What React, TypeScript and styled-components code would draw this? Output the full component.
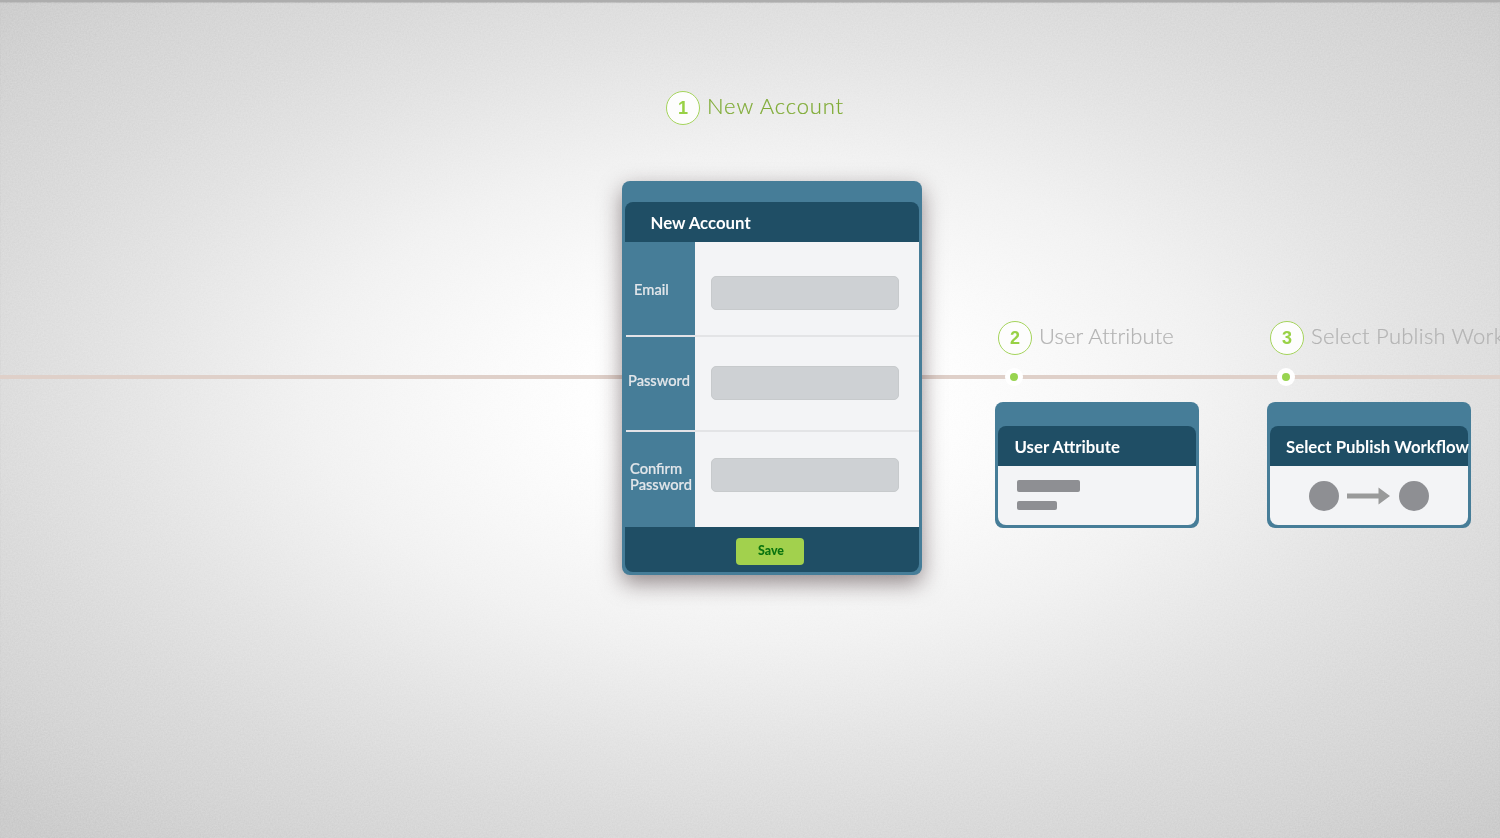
import React from "react";
import styled, { createGlobalStyle } from "styled-components";

const GlobalStyle = createGlobalStyle`
  * { box-sizing: border-box; }
  html, body { margin: 0; padding: 0; overflow: hidden; }
`;

const Page = styled.main`
  position: relative;
  width: 1500px;
  height: 838px;
  overflow: hidden;
  border-top: 2px solid #adadad;
  box-shadow: inset 0 1px 1px #bdbdbd;
  font-family: Lato, "Open Sans", sans-serif;
  background: radial-gradient(ellipse 1000px 540px at 760px 396px,
    #ffffff 0%, #fefefe 18%, #fbfbfb 26%, #f7f7f7 35%, #f2f2f2 45%, #ebebeb 55%,
    #e3e3e3 66%, #dbdbdb 79%, #d5d5d5 92%, #cccccc 108%);
`;

const Grain = styled.svg`
  position: absolute;
  inset: 0;
  width: 100%;
  height: 100%;
  opacity: 0.16;
  mix-blend-mode: overlay;
`;

const Track = styled.div`
  position: absolute;
  top: 373px;
  left: 0;
  width: 100%;
  height: 4px;
  background: #dfd0c9;
`;

const Steps = styled.div`
  position: relative;
  display: flex;
  align-items: flex-start;
  padding-left: 622px;
`;

const Step = styled.section<{ $width: number; $top: number; $gap?: number }>`
  flex: none;
  width: ${(p) => p.$width}px;
  margin-left: ${(p) => p.$gap ?? 0}px;
  padding-top: ${(p) => p.$top}px;
`;

const StepHeading = styled.header<{ $indent: number }>`
  display: flex;
  align-items: center;
  height: 34px;
  gap: 7px;
  padding-left: ${(p) => p.$indent}px;
`;

const Badge = styled.span`
  display: flex;
  flex: none;
  align-items: center;
  justify-content: center;
  width: 34px;
  height: 34px;
  border: 1px solid #a5d45c;
  border-radius: 50%;
  background: #fdfdfd;
  color: #98d145;
  font: 700 18px/34px "Liberation Sans", Arial, sans-serif;
`;

const StepTitle = styled.h2<{ $active?: boolean; $spacing: number }>`
  margin: 0;
  padding-bottom: 4px;
  font-size: 22px;
  font-weight: 300;
  line-height: 30px;
  white-space: nowrap;
  letter-spacing: ${(p) => p.$spacing}px;
  color: ${(p) => (p.$active ? "#7fab35" : "#b3b3b3")};
  -webkit-text-stroke: 0.2px currentColor;
`;

const Marker = styled.div`
  display: flex;
  align-items: center;
  justify-content: center;
  width: 18px;
  height: 18px;
  margin: 13px 0 16px 10px;
  border-radius: 50%;
  background: #fff;

  &::after {
    content: "";
    width: 8px;
    height: 8px;
    border-radius: 50%;
    background: #98d450;
  }
`;

const Card = styled.div<{ $lip: number; $raised?: boolean }>`
  padding: ${(p) => p.$lip}px 3px 3px;
  border-radius: 8px;
  background: #467d98;
  box-shadow: ${(p) => (p.$raised ? "0 8px 22px rgba(45, 25, 30, 0.5)" : "none")};
`;

const CardTitle = styled.h3<{ $indent: number }>`
  display: flex;
  align-items: center;
  height: 40px;
  margin: 0;
  padding: 2px 0 0 ${(p) => p.$indent}px;
  border-radius: 8px 8px 0 0;
  background: #1f4e65;
  color: #fff;
  font-size: 16.8px;
  font-weight: 700;
  line-height: 20px;
  white-space: nowrap;
`;

const Form = styled.form`
  margin-top: 56px;
`;

const Row = styled.div<{ $divided?: boolean }>`
  position: relative;
  display: flex;
  height: 95px;

  &::after {
    content: "";
    display: ${(p) => (p.$divided ? "block" : "none")};
    position: absolute;
    left: 1px;
    right: 0;
    bottom: 0;
    height: 2px;
    background: linear-gradient(90deg, #e3e3e7 69px, #e3e4e6 69px);
  }
`;

const Label = styled.label<{ $top: number; $indent: number }>`
  flex: none;
  width: 70px;
  padding: ${(p) => p.$top}px 0 0 ${(p) => p.$indent}px;
  color: #e2e6ea;
  font-size: 14.7px;
  font-weight: 500;
  line-height: 16px;
  white-space: pre;
  -webkit-text-stroke: 0.2px currentColor;
`;

const Field = styled.div<{ $top: number }>`
  flex: 1;
  padding: ${(p) => p.$top}px 20px 0 16px;
  background: #f3f4f6;
`;

const Input = styled.input`
  display: block;
  width: 188px;
  height: 34px;
  border: 1px solid #c7cacc;
  border-radius: 5px;
  background: #ced1d4;
`;

const Actions = styled.footer`
  display: flex;
  height: 45px;
  padding: 11px 0 0 111px;
  border-radius: 0 0 8px 8px;
  background: #1f4e65;
`;

const SaveButton = styled.button`
  width: 68px;
  height: 27px;
  padding: 0 0 1px 2px;
  border: 0;
  border-radius: 4px;
  background: #a2d14d;
  color: #0a740f;
  font: 900 12.4px/16px Lato, sans-serif;
`;

const Preview = styled.div<{ $centered?: boolean }>`
  display: flex;
  flex-direction: ${(p) => (p.$centered ? "row" : "column")};
  align-items: ${(p) => (p.$centered ? "center" : "flex-start")};
  justify-content: ${(p) => (p.$centered ? "center" : "flex-start")};
  height: 59px;
  padding: ${(p) => (p.$centered ? "0" : "14px 0 0 19px")};
  gap: ${(p) => (p.$centered ? 8 : 9)}px;
  border-radius: 0 0 8px 8px;
  background: #f3f4f6;
`;

const Bar = styled.span<{ $width: number; $height: number }>`
  width: ${(p) => p.$width}px;
  height: ${(p) => p.$height}px;
  border-radius: 2px;
  background: #8e8f93;
`;

const Dot = styled.span`
  width: 30px;
  height: 30px;
  border-radius: 50%;
  background: #8e8f93;
`;

const fields = [
  { label: "Email", top: 39, indent: 9, inputTop: 34 },
  { label: "Password", top: 35, indent: 3, inputTop: 29 },
  { label: "Confirm\nPassword", top: 28, indent: 5, inputTop: 26 },
];

export default function App() {
  return (
    <Page>
      <GlobalStyle />
      <Grain aria-hidden="true">
        <filter id="grain" colorInterpolationFilters="sRGB">
          <feTurbulence type="fractalNoise" baseFrequency="0.65" numOctaves="2" />
          <feColorMatrix values="1 0 0 0 0  1 0 0 0 0  1 0 0 0 0  0 0 0 0 1" />
        </filter>
        <rect width="100%" height="100%" filter="url(#grain)" />
      </Grain>
      <Track />
      <Steps>
        <Step $width={300} $top={89}>
          <StepHeading $indent={44}>
            <Badge>1</Badge>
            <StepTitle $active $spacing={0.85}>New Account</StepTitle>
          </StepHeading>
          <Form onSubmit={(e) => e.preventDefault()}>
            <Card $lip={21} $raised>
              <CardTitle $indent={25.5}>New Account</CardTitle>
              {fields.map((f, i) => (
                <Row key={f.label} $divided={i < 2}>
                  <Label htmlFor={`field-${i}`} $top={f.top} $indent={f.indent}>
                    {f.label}
                  </Label>
                  <Field $top={f.inputTop}>
                    <Input id={`field-${i}`} type={i ? "password" : "email"} />
                  </Field>
                </Row>
              ))}
              <Actions>
                <SaveButton>Save</SaveButton>
              </Actions>
            </Card>
          </Form>
        </Step>

        <Step $width={204} $top={319} $gap={73}>
          <StepHeading $indent={3}>
            <Badge>2</Badge>
            <StepTitle $spacing={0.1}>User Attribute</StepTitle>
          </StepHeading>
          <Marker />
          <Card $lip={24}>
            <CardTitle $indent={16.5}>User Attribute</CardTitle>
            <Preview>
              <Bar $width={63} $height={12} />
              <Bar $width={40} $height={9} />
            </Preview>
          </Card>
        </Step>

        <Step $width={204} $top={319} $gap={68}>
          <StepHeading $indent={3}>
            <Badge>3</Badge>
            <StepTitle $spacing={0.25}>Select Publish Workflow</StepTitle>
          </StepHeading>
          <Marker />
          <Card $lip={24}>
            <CardTitle $indent={16}>Select Publish Workflow</CardTitle>
            <Preview $centered>
              <Dot />
              <svg width="44" height="18" viewBox="0 0 44 18" fill="#999a9a">
                <path d="M0 6.500h31.500V0.500L43 9 31.500 17.500V11.500H0z" />
              </svg>
              <Dot />
            </Preview>
          </Card>
        </Step>
      </Steps>
    </Page>
  );
}
